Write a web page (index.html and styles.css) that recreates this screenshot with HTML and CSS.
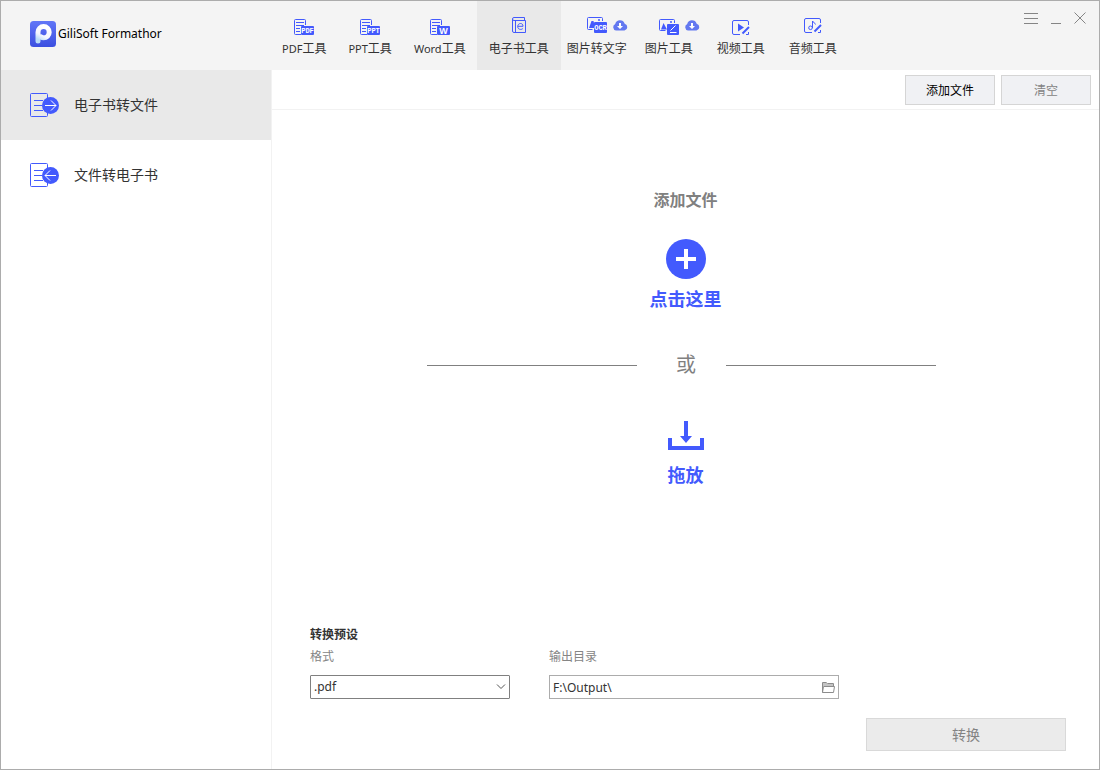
FILE: index.html
```html
<!DOCTYPE html>
<html lang="zh-CN">
<head>
<meta charset="utf-8">
<meta name="viewport" content="width=device-width, initial-scale=1">
<title>GiliSoft Formathor</title>
<link rel="stylesheet" href="styles.css">
</head>
<body>
<div class="window">
  <header class="header">
    <div class="brand">
      <svg class="brand-logo" width="26" height="26" viewBox="0 0 26 26" aria-hidden="true">
        <defs>
          <linearGradient id="logo-bg" x1="0" y1="0" x2="0" y2="1"><stop offset="0" stop-color="#6176f7"/><stop offset="1" stop-color="#3b4fe0"/></linearGradient>
          <linearGradient id="logo-fg" x1="0.7" y1="0" x2="0.3" y2="1"><stop offset="0" stop-color="#ffffff"/><stop offset="0.65" stop-color="#f4f6ff"/><stop offset="1" stop-color="#b9dcf8"/></linearGradient>
        </defs>
        <rect width="26" height="26" rx="3.5" fill="url(#logo-bg)"/>
        <path d="M8 20V11.200A5.600 5.600 0 1 1 13.600 16.800C12.500 16.800 11.800 16.500 11.200 16" fill="none" stroke="url(#logo-fg)" stroke-width="5" stroke-linecap="round" stroke-linejoin="round"/>
      </svg>
      <span class="brand-name">GiliSoft Formathor</span>
    </div>
    <nav class="tabs" aria-label="工具">
      <button class="tab tab-latin" type="button">
        <span class="tab-icon"><svg width="20" height="16" viewBox="0 0 20 16" aria-hidden="true"><path d="M7 15.500H1.500a1 1 0 0 1-1-1v-13a1 1 0 0 1 1-1h9a1 1 0 0 1 1 1V6M2 3.500h8M2 6.500h8M2 9.500h4M2 12.500h4" class="line"/><rect x="7" y="7" width="13" height="9" rx="1" class="solid"/><text x="13.500" y="14" class="tag">PDF</text></svg></span>
        <span><span class="latin">PDF</span>工具</span>
      </button>
      <button class="tab tab-latin" type="button">
        <span class="tab-icon"><svg width="20" height="16" viewBox="0 0 20 16" aria-hidden="true"><path d="M7 15.500H1.500a1 1 0 0 1-1-1v-13a1 1 0 0 1 1-1h9a1 1 0 0 1 1 1V6M2 3.500h8M2 6.500h8M2 9.500h4M2 12.500h4" class="line"/><rect x="7" y="7" width="13" height="9" rx="1" class="solid"/><text x="13.500" y="14" class="tag">PPT</text></svg></span>
        <span><span class="latin">PPT</span>工具</span>
      </button>
      <button class="tab tab-latin" type="button">
        <span class="tab-icon"><svg width="20" height="16" viewBox="0 0 20 16" aria-hidden="true"><path d="M7 15.500H1.500a1 1 0 0 1-1-1v-13a1 1 0 0 1 1-1h9a1 1 0 0 1 1 1V6M2 3.500h8M2 6.500h8M2 9.500h4M2 12.500h4" class="line"/><rect x="7" y="7" width="13" height="9" rx="1" class="solid"/><text x="13.500" y="15" class="tag tag-large">W</text></svg></span>
        <span><span class="latin">Word</span>工具</span>
      </button>
      <button class="tab tab-active" type="button" aria-current="page">
        <span class="tab-icon tab-icon-high"><svg width="14" height="16" viewBox="0 0 14 16" aria-hidden="true"><path d="M13.500 3.500v12H2a1.500 1.500 0 0 1-1.500-1.500V2A1.500 1.500 0 0 1 2 .5h10.500v3M13.500 3.500H2A1.500 1.500 0 0 1 .5 2M3.500 3.500v12" class="line"/><path d="M5.800 9.300h5.200c0-1.800-1-2.800-2.500-2.800s-2.800 1.200-2.800 3 1.200 2.900 2.900 2.900c.9 0 1.600-.3 2.200-.8" class="line"/></svg></span>
        <span>电子书工具</span>
      </button>
      <button class="tab tab-tight" type="button">
        <span class="tab-icon tab-icon-high"><svg width="20" height="16" viewBox="0 0 20 16" aria-hidden="true"><path d="M5.500 12.500H1.500a1 1 0 0 1-1-1v-10a1 1 0 0 1 1-1h13a1 1 0 0 1 1 1V4" class="line"/><path d="M2 11 4.500 4h2L7 6v5z" class="solid"/><circle cx="12" cy="3" r="1" class="solid"/><rect x="7" y="5" width="13" height="11" rx="1" class="solid"/><text x="13.500" y="13" class="tag">OCR</text></svg>
          <svg class="cloud" width="16" height="11" viewBox="0 0 16 11" aria-hidden="true"><path d="M4 10.500A3.500 3.500 0 0 1 3.200 3.900 5 5 0 0 1 12.700 3.700 3.500 3.500 0 0 1 12.500 10.500z" fill="#6378f0"/><path d="M7 3h2v3h2L8 9 5 6h2z" fill="#fff"/></svg></span>
        <span>图片转文字</span>
      </button>
      <button class="tab" type="button">
        <span class="tab-icon"><svg width="20" height="16" viewBox="0 0 20 16" aria-hidden="true"><path d="M6.500 11.500h-5a1 1 0 0 1-1-1v-9a1 1 0 0 1 1-1h13a1 1 0 0 1 1 1V4" class="line"/><path d="M2 10.500 4.500 4 8 10.500z" class="solid"/><circle cx="12" cy="3" r="1" class="solid"/><rect x="8" y="5" width="12" height="11" rx="1" class="solid"/><path d="M11 13.500h6.500M11.500 11.500l5-5" class="white-line"/></svg>
          <svg class="cloud" width="16" height="11" viewBox="0 0 16 11" aria-hidden="true"><path d="M4 10.500A3.500 3.500 0 0 1 3.200 3.900 5 5 0 0 1 12.700 3.700 3.500 3.500 0 0 1 12.500 10.500z" fill="#6378f0"/><path d="M7 3h2v3h2L8 9 5 6h2z" fill="#fff"/></svg></span>
        <span>图片工具</span>
      </button>
      <button class="tab" type="button">
        <span class="tab-icon"><svg width="18" height="16" viewBox="0 0 18 16" aria-hidden="true"><path d="M8 15.500H2A1.500 1.500 0 0 1 .5 14V3A1.500 1.500 0 0 1 2 1.500h13A1.500 1.500 0 0 1 16.500 3v3M16.500 13v2.500H14" class="line"/><path d="M6 4.500v8l6-4z" class="solid"/><path d="m10.500 14.500 6.500-6.500" class="pen"/></svg></span>
        <span>视频工具</span>
      </button>
      <button class="tab" type="button">
        <span class="tab-icon tab-icon-high"><svg width="18" height="16" viewBox="0 0 18 16" aria-hidden="true"><path d="M8 15.500H2A1.500 1.500 0 0 1 .5 14V3A1.500 1.500 0 0 1 2 1.500h13A1.500 1.500 0 0 1 16.500 3v3M16.500 13v2.500H14" class="line"/><circle cx="6.500" cy="10.800" r="1.800" class="line"/><path d="M8.500 11V4c.5 1.500 2.500 1.500 3 3.500" class="line"/><path d="m10.500 14.500 6.500-6.500" class="pen"/></svg></span>
        <span>音频工具</span>
      </button>
    </nav>
    <div class="window-controls">
      <button class="control" type="button" aria-label="菜单"><svg width="14" height="12" viewBox="0 0 14 12"><path d="M0 1.500h14M0 6.500h14M0 11.500h14"/></svg></button>
      <button class="control" type="button" aria-label="最小化"><svg width="10" height="12" viewBox="0 0 10 12"><path d="M0 11.500h10"/></svg></button>
      <button class="control" type="button" aria-label="关闭"><svg width="12" height="12" viewBox="0 0 12 12"><path d="m.5.5 11 11M11.500.5l-11 11"/></svg></button>
    </div>
  </header>

  <div class="body">
    <aside class="sidebar">
      <button class="side-item side-item-active" type="button" aria-current="true">
        <svg width="30" height="25" viewBox="0 0 30 25" aria-hidden="true"><rect x=".5" y=".5" width="17" height="23" rx="1" class="line"/><path d="M4 7.500h9M4 12.500h8M4 17.500h9" class="line"/><circle cx="20.500" cy="12.500" r="8.500" class="solid"/><path d="M15 12.500h11M21 7.500l5 5-5 5" class="white-line"/></svg>
        <span>电子书转文件</span>
      </button>
      <button class="side-item" type="button">
        <svg width="30" height="25" viewBox="0 0 30 25" aria-hidden="true"><rect x=".5" y=".5" width="17" height="23" rx="1" class="line"/><path d="M4 7.500h9M4 12.500h8M4 17.500h9" class="line"/><circle cx="20.500" cy="12.500" r="8.500" class="solid"/><path d="M26 12.500H15M20 7.500l-5 5 5 5" class="white-line"/></svg>
        <span>文件转电子书</span>
      </button>
    </aside>

    <main class="main">
      <div class="toolbar">
        <button class="button" type="button">添加文件</button>
        <button class="button" type="button" disabled>清空</button>
      </div>

      <section class="drop-area">
        <h1 class="drop-title">添加文件</h1>
        <button class="drop-action" type="button">
          <svg width="40" height="40" viewBox="0 0 40 40" aria-hidden="true"><circle cx="20" cy="20" r="20" class="solid"/><path d="M10 20h20M20 10v20" stroke="#fff" stroke-width="4"/></svg>
          <span>点击这里</span>
        </button>
        <div class="divider"><span class="divider-text">或</span></div>
        <div class="drop-hint">
          <svg width="36" height="29" viewBox="0 0 36 29" aria-hidden="true"><path d="M2 17v10h32V17" fill="none" stroke="#435afd" stroke-width="4"/><path d="M16 0h4v15h4l-6 7-6-7h4z" class="solid"/></svg>
          <span>拖放</span>
        </div>
      </section>

      <form class="settings">
        <h2 class="settings-title">转换预设</h2>
        <div class="fields">
          <div class="field field-format">
            <label for="format">格式</label>
            <div class="control-box control-box-dark">
              <select id="format"><option>.pdf</option></select>
              <svg class="chevron" width="10" height="6" viewBox="0 0 10 6" aria-hidden="true"><path d="m1 .5 4 4 4-4" fill="none" stroke="#555"/></svg>
            </div>
          </div>
          <div class="field field-output">
            <label for="output">输出目录</label>
            <div class="control-box">
              <input id="output" type="text" value="F:\Output\">
              <button class="browse" type="button" aria-label="浏览"><svg width="13" height="11" viewBox="0 0 13 11"><path d="M1 3V1h3l1.500 1H11v2H1z" fill="#c4c4c4"/><path d="M.5 10.500V.5h3.500l1.500 1H11.500v3M.5 10.500l1-6h11l-1 6z" fill="none" stroke="#8c8c8c"/></svg></button>
            </div>
          </div>
        </div>
        <button class="convert" type="button" disabled>转换</button>
      </form>
    </main>
  </div>
</div>
</body>
</html>
```
FILE: styles.css
```css
* {
  box-sizing: border-box;
}

body {
  margin: 0;
  font-family: "Noto Sans", "Noto Sans CJK SC", sans-serif;
  font-size: 12px;
  line-height: 18px;
  color: #333;
}

button,
input,
select {
  margin: 0;
  padding: 0;
  border: 0;
  background: none;
  color: inherit;
  font: inherit;
}

svg {
  display: block;
}

.line {
  fill: none;
  stroke: #435afd;
}

.solid {
  fill: #435afd;
}

.white-line {
  fill: none;
  stroke: #fff;
}

.pen {
  stroke: #435afd;
  stroke-width: 2;
}

.tag {
  fill: #fff;
  font-family: "Liberation Mono", monospace;
  font-size: 7px;
  font-weight: 700;
  text-anchor: middle;
}

.tag-large {
  font-family: "Liberation Sans", sans-serif;
  font-size: 9px;
}

.window {
  display: flex;
  flex-direction: column;
  min-height: 100vh;
  border: 1px solid #acacac;
  background: #fff;
}

.header {
  display: flex;
  background: #f4f4f4;
}

.brand {
  display: flex;
  flex: none;
  align-items: center;
  gap: 2px;
  width: 270px;
  padding: 0 0 4px 29px;
  color: #000;
}

.tabs {
  display: flex;
  flex: 1;
}

.tab {
  display: flex;
  flex-direction: column;
  align-items: center;
  gap: 5px;
  padding: 18px 12px 12px;
  white-space: nowrap;
}

.tab-latin {
  padding-right: 11px;
  padding-left: 11px;
}

.latin {
  font-size: 11px;
}

.tab-tight {
  padding-right: 6px;
  padding-left: 6px;
}

.tab-active {
  background: #e9e9e9;
}

.tab-icon {
  display: block;
  position: relative;
}

.tab-icon-high {
  margin: -2px 0 2px;
}

.cloud {
  position: absolute;
  top: 1px;
  left: 25px;
}

.tab-icon-high .cloud {
  top: 3px;
}

.window-controls {
  display: flex;
  align-items: flex-start;
  gap: 13px;
  padding: 11px 13px 0 0;
}

.control svg {
  fill: none;
  stroke: #858585;
}

.body {
  display: flex;
  flex: 1;
}

.sidebar {
  flex: none;
  width: 271px;
  border-right: 1px solid #f2f2f2;
}

.side-item {
  display: flex;
  align-items: center;
  gap: 14px;
  width: 100%;
  height: 70px;
  padding-left: 29px;
  font-size: 14px;
}

.side-item-active {
  background: #e9e9e9;
}

.main {
  display: flex;
  flex: 1;
  flex-direction: column;
}

.toolbar {
  display: flex;
  justify-content: flex-end;
  gap: 6px;
  padding: 5px 8px 4px;
  border-bottom: 1px solid #f2f2f2;
}

.button {
  width: 90px;
  height: 30px;
  padding-top: 2px;
  border: 1px solid #d5d5d5;
  background: #f0f1f4;
  color: #000;
}

.button:disabled {
  color: #838383;
}

.drop-area {
  display: flex;
  flex: 1;
  flex-direction: column;
  align-items: center;
  padding-top: 78px;
  color: #435afd;
  font-size: 18px;
  font-weight: 700;
  line-height: 24px;
}

.drop-title {
  margin: 0 0 27px;
  color: #808080;
  font-size: 16px;
}

.drop-action {
  display: flex;
  flex-direction: column;
  align-items: center;
  gap: 8px;
}

.divider {
  display: flex;
  align-items: center;
  width: 100%;
  max-width: 517px;
  margin: 40px 0 42px;
  padding-right: 8px;
  color: #808080;
  font-size: 20px;
  font-weight: 400;
  line-height: 28px;
}

.divider::before,
.divider::after {
  flex: 1;
  height: 1px;
  background: #808080;
  content: "";
}

.divider-text {
  padding: 0 30px 0 39px;
}

.drop-hint {
  display: flex;
  flex-direction: column;
  align-items: center;
  gap: 13px;
}

.settings {
  display: flex;
  flex-direction: column;
  padding: 0 33px 18px 38px;
}

.settings-title {
  margin: 0 0 4px;
  font-size: 12px;
}

.fields {
  display: flex;
  gap: 39px;
  margin-bottom: 19px;
}

.field {
  display: flex;
  flex-direction: column;
  gap: 9px;
}

.field label {
  color: #858585;
}

.field-format {
  width: 200px;
}

.field-output {
  width: 290px;
}

.control-box {
  display: flex;
  align-items: center;
  position: relative;
  height: 24px;
  padding: 0 3px;
  border: 1px solid #acacac;
}

.control-box-dark {
  border-color: #808080;
  border-radius: 1px;
}

.control-box input,
.control-box select {
  flex: 1;
  min-width: 0;
  height: 22px;
  appearance: none;
  outline: none;
}

.chevron {
  position: absolute;
  right: 3px;
  pointer-events: none;
}

.convert {
  align-self: flex-end;
  width: 200px;
  height: 33px;
  border: 1px solid #d9d9d9;
  background: #ebebeb;
  color: #838383;
  font-size: 14px;
}
```
